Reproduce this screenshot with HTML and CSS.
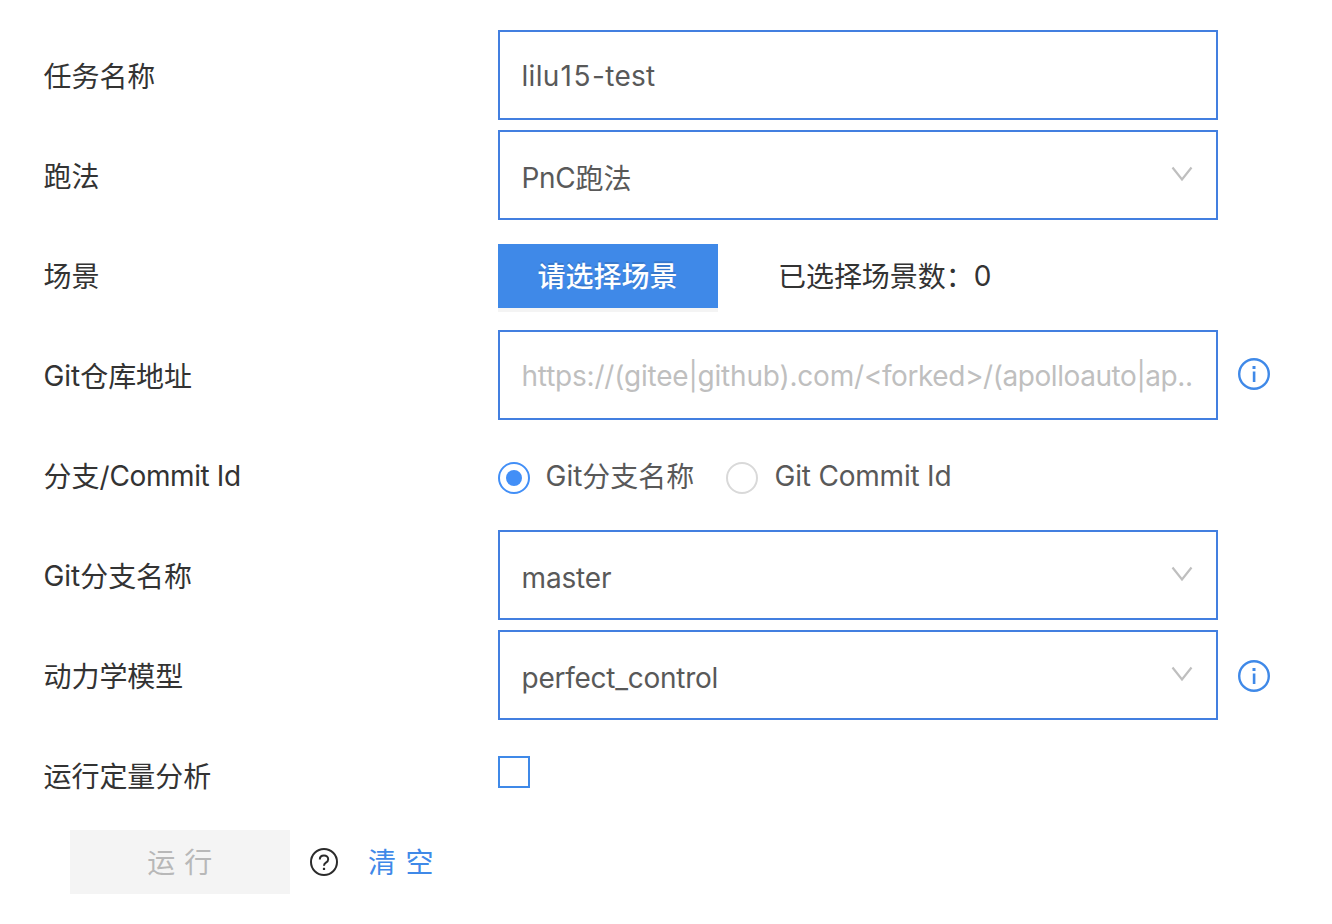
FILE: index.html
```html
<!DOCTYPE html>
<html lang="zh-CN">
<head>
<meta charset="utf-8">
<title>任务</title>
<link rel="stylesheet" href="styles.css">
</head>
<body>
<form class="form">
  <div class="row">
    <div class="label">任务名称</div>
    <div class="field"><span class="text"><span class="latin name">lilu<span class="digits">15</span>-test</span></span></div>
  </div>
  <div class="row">
    <div class="label">跑法</div>
    <div class="field select"><span class="text"><span class="latin pnc">PnC</span>跑法</span><svg class="chevron" viewBox="0 0 22 16"><path d="M1.500 1.500 11 13.500 20.500 1.500"/></svg></div>
  </div>
  <div class="row">
    <div class="label">场景</div>
    <button type="button" class="btn primary">请选择场景</button>
    <div class="count">已选择场景数：<span class="latin">0</span></div>
  </div>
  <div class="row">
    <div class="label"><span class="latin git">Git</span>仓库地址</div>
    <div class="field"><span class="text placeholder"><span class="latin url">https://(gitee|github).com/<span class="path">&lt;forked&gt;/(apolloauto|ap..</span></span></span></div>
    <svg class="info" viewBox="0 0 32 32"><circle cx="16" cy="16" r="14.800"/><path d="M14.500 8h3v3h-3zM14.800 13.500h2.600v10.500h-2.600z"/></svg>
  </div>
  <div class="row">
    <div class="label">分支/<span class="latin commit">Commit Id</span></div>
    <div class="radios">
      <span class="radio checked"></span><span class="option first"><span class="latin git">Git</span>分支名称</span>
      <span class="radio"></span><span class="option"><span class="latin commit-option">Git Commit Id</span></span>
    </div>
  </div>
  <div class="row">
    <div class="label"><span class="latin git">Git</span>分支名称</div>
    <div class="field select"><span class="text"><span class="latin master">master</span></span><svg class="chevron" viewBox="0 0 22 16"><path d="M1.500 1.500 11 13.500 20.500 1.500"/></svg></div>
  </div>
  <div class="row">
    <div class="label">动力学模型</div>
    <div class="field select"><span class="text"><span class="latin control">perfect_control</span></span><svg class="chevron" viewBox="0 0 22 16"><path d="M1.500 1.500 11 13.500 20.500 1.500"/></svg></div>
    <svg class="info low" viewBox="0 0 32 32"><circle cx="16" cy="16" r="14.800"/><path d="M14.500 8h3v3h-3zM14.800 13.500h2.600v10.500h-2.600z"/></svg>
  </div>
  <div class="row">
    <div class="label">运行定量分析</div>
    <span class="checkbox"></span>
  </div>
  <div class="actions">
    <button type="button" class="btn disabled">运 行</button>
    <svg class="help" viewBox="0 0 28 28"><circle cx="14" cy="14" r="13"/><path d="M9.800 11.500c0-2.400 1.800-4 4.200-4s4.200 1.600 4.200 3.700c0 1.700-.9 2.600-2.300 3.500-1.300.8-1.900 1.500-1.900 3.100"/><path class="dot" d="M12.900 19.800h2.200v2.200h-2.200z"/></svg>
    <a class="clear">清 空</a>
  </div>
</form>
</body>
</html>
```
FILE: styles.css
```css
* { box-sizing: border-box; }
body {
  margin: 0;
  background: #fff;
  color: #333;
  font: 28px/40px Inter, "Noto Sans CJK SC", sans-serif;
}
.form { padding: 25px 0 0 43.500px; }
.row { display: flex; align-items: center; height: 100px; }
.label { width: 454.500px; padding-top: 4px; white-space: nowrap; letter-spacing: -.05px; }
.field {
  display: flex;
  align-items: center;
  justify-content: space-between;
  width: 720px;
  height: 90px;
  padding: 3px 23px 0 21.500px;
  border: 2px solid #437fe0;
  color: #595959;
  white-space: nowrap;
}
.select { padding-top: 7px; }
.placeholder { color: #bfbfbf; }
.chevron { width: 22px; height: 16px; margin-top: -9px; fill: none; stroke: #bfbfbf; stroke-width: 2.200; }
.btn {
  width: 220px;
  height: 64px;
  padding: 2px 0 0;
  border: 0;
  font: inherit;
}
.primary {
  margin-top: 2px;
  padding-right: 1px;
  background: #3f89e8;
  color: #fff;
  font-weight: 500;
  box-shadow: 0 4px 0 rgba(0, 0, 0, .045);
  text-shadow: 0 -2px 0 rgba(0, 0, 0, .12);
}
.count { display: flex; margin-left: 60px; padding-top: 4px; letter-spacing: -.05px; }
.info { width: 32px; height: 32px; margin: -2px 0 0 20px; fill: #3f89e8; }
.info.low { margin-top: 2px; }
.info circle { fill: none; stroke: #3f89e8; stroke-width: 2.400; }
.radios { display: flex; align-items: center; color: #595959; }
.radio {
  display: flex;
  align-items: center;
  justify-content: center;
  width: 32px;
  height: 32px;
  margin-top: 6px;
  border: 2px solid #d9d9d9;
  border-radius: 50%;
}
.checked { border-color: #428ff7; }
.checked::after { content: ""; width: 16px; height: 16px; border-radius: 50%; background: #428ff7; }
.option { padding-top: 4px; margin-left: 16.500px; white-space: nowrap; }
.first { width: 180.500px; margin-left: 15.500px; }
.checkbox { width: 32px; height: 32px; margin-top: -6px; border: 2px solid #3f89e8; }
.actions { display: flex; align-items: center; height: 64px; margin: 5px 0 0 26.500px; }
.disabled { background: #f4f4f4; color: #b8b8b8; letter-spacing: .5px; }
.help { width: 28px; height: 28px; margin: 0 30px 0 20px; fill: none; stroke: #2b2b2b; stroke-width: 2; }
.help .dot { fill: #2b2b2b; stroke: none; }
.clear { padding-top: 2px; color: #3f89e8; letter-spacing: .8px; }
.latin { display: inline-block; transform: translateY(-1px); }
.name { letter-spacing: .3px; }
.digits { margin-left: 1px; letter-spacing: 1.500px; }
.pnc { letter-spacing: -.3px; }
.url { letter-spacing: -.2px; }
.path { letter-spacing: -.43px; }
.commit { letter-spacing: -.4px; }
.commit-option { letter-spacing: -.2px; }
.master { letter-spacing: -.15px; }
.control { letter-spacing: -.25px; }
```
